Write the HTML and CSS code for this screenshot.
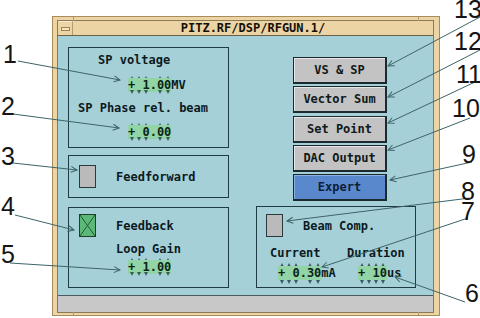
FILE: index.html
```html
<!DOCTYPE html>
<html lang="en">
<head>
  <meta charset="UTF-8">
  <title>PITZ.RF/DSP/RFGUN.1/</title>
  <link rel="stylesheet" href="styles.css">
</head>
<body>
  <div class="page">
    <div class="window">
      <div class="inner">
        <div class="titlebar">
          <div class="menu-btn"><span></span></div>
          <div class="title">PITZ.RF/DSP/RFGUN.1/</div>
        </div>

        <div class="content">
          <div class="left-col">
            <div class="box box-sp">
              <div class="label l-voltage">SP voltage</div>
              <div class="field f-voltage">
                <div class="arrows up"><i></i><i></i><i></i><b></b><i></i><i></i></div>
                <div class="value"><span class="num">+ 1.00</span>MV</div>
                <div class="arrows down"><i></i><i></i><i></i><b></b><i></i><i></i></div>
              </div>
              <div class="label l-phase">SP Phase rel. beam</div>
              <div class="field f-phase">
                <div class="arrows up"><i></i><i></i><i></i><b></b><i></i><i></i></div>
                <div class="value"><span class="num">+ 0.00</span></div>
                <div class="arrows down"><i></i><i></i><i></i><b></b><i></i><i></i></div>
              </div>
            </div>

            <div class="box box-ff">
              <div class="check"></div>
              <div class="label">Feedforward</div>
            </div>

            <div class="box box-fb">
              <div class="check-row">
                <div class="check on"></div>
                <div class="label">Feedback</div>
              </div>
              <div class="label l-gain">Loop Gain</div>
              <div class="field f-gain">
                <div class="arrows up"><i></i><i></i><i></i><b></b><i></i><i></i></div>
                <div class="value"><span class="num">+ 1.00</span></div>
                <div class="arrows down"><i></i><i></i><i></i><b></b><i></i><i></i></div>
              </div>
            </div>
          </div>

          <div class="right-col">
            <div class="buttons">
              <div class="btn">VS &amp; SP</div>
              <div class="btn">Vector Sum</div>
              <div class="btn">Set Point</div>
              <div class="btn">DAC Output</div>
              <div class="btn btn-expert">Expert</div>
            </div>

            <div class="box box-beam">
              <div class="check-row">
                <div class="check"></div>
                <div class="label">Beam Comp.</div>
              </div>
              <div class="beam-cols">
                <div class="col col-current">
                  <div class="label">Current</div>
                  <div class="field f-current">
                    <div class="arrows up"><i></i><i></i><i></i><b></b><i></i><i></i></div>
                    <div class="value"><span class="num">+ 0.30</span>mA</div>
                    <div class="arrows down"><i></i><i></i><i></i><b></b><i></i><i></i></div>
                  </div>
                </div>
                <div class="col col-duration">
                  <div class="label">Duration</div>
                  <div class="field f-duration">
                    <div class="arrows up"><i></i><i></i><i></i><i></i></div>
                    <div class="value"><span class="num">+ 10</span>us</div>
                    <div class="arrows down"><i></i><i></i><i></i><i></i></div>
                  </div>
                </div>
              </div>
            </div>
          </div>
        </div>

        <div class="statusbar"></div>
      </div>
    </div>

    <!-- callout numbers and leader lines -->
    <svg class="notes" width="480" height="318" viewBox="0 0 480 318">
      <defs>
        <marker id="tip" markerWidth="8" markerHeight="8" refX="7" refY="4" orient="auto" markerUnits="userSpaceOnUse">
          <path d="M1,1 L7,4 L1,7" fill="none" stroke="#3d6468" stroke-width="1"/>
        </marker>
      </defs>
      <g class="leaders">
        <line x1="18" y1="61" x2="120" y2="80"/>
        <line x1="13" y1="114" x2="119" y2="128"/>
        <line x1="13" y1="163" x2="77" y2="170"/>
        <line x1="15" y1="215" x2="74" y2="230"/>
        <line x1="10" y1="263" x2="120" y2="270"/>
        <line x1="480" y1="17" x2="388" y2="66"/>
        <line x1="480" y1="50" x2="388" y2="97"/>
        <line x1="475" y1="82" x2="388" y2="123"/>
        <line x1="470" y1="118" x2="388" y2="150"/>
        <line x1="472" y1="162" x2="390" y2="180"/>
        <line x1="470" y1="198" x2="287" y2="221"/>
        <line x1="468" y1="218" x2="322" y2="267"/>
        <line x1="465" y1="302" x2="395" y2="277"/>
      </g>
      <text x="3" y="63">1</text>
      <text x="1" y="115">2</text>
      <text x="1" y="165">3</text>
      <text x="1" y="215">4</text>
      <text x="1" y="263">5</text>
      <text x="454" y="18">13</text>
      <text x="454" y="50">12</text>
      <text x="456" y="83">11</text>
      <text x="452" y="117">10</text>
      <text x="462" y="163">9</text>
      <text x="461" y="200">8</text>
      <text x="461" y="220">7</text>
      <text x="465" y="302">6</text>
    </svg>
  </div>
</body>
</html>
```

FILE: styles.css
```css
body {
  margin: 0;
  background-color: #ffffff;
  font-family: "DejaVu Sans Mono", monospace;
  font-weight: bold;
  font-size: 12px;
  color: #0c1a1e;
}

.page {
  position: relative;
  width: 480px;
  height: 318px;
  box-sizing: border-box;
  padding: 16px 0 0 52px;
  overflow: hidden;
}

/* window frame */
.window {
  position: relative;
  width: 388px;
  height: 300px;
  box-sizing: border-box;
  border: 1px solid #a88c5c;
  background-color: #ecd4a4;
  padding: 4px 6px 3px 5px;
}

.window::before,
.window::after {
  content: "";
  position: absolute;
  left: 20px;
  width: 344px;
  height: 4px;
  border-left: 1px solid #b49a6c;
  border-right: 1px solid #b49a6c;
}

.window::before {
  top: 0;
}

.window::after {
  bottom: 0;
  height: 3px;
}

.inner {
  display: flex;
  flex-direction: column;
  box-shadow: 0 0 0 1px #8c7a56;
}

.titlebar {
  display: flex;
  height: 15px;
  box-sizing: border-box;
  background-color: #ecd4a4;
  border-bottom: 1px solid #6a6046;
}

.menu-btn {
  width: 15px;
  box-sizing: border-box;
  border-right: 1px solid #b49a6c;
  border-top: 1px solid #f8ecd0;
  display: flex;
  align-items: center;
  justify-content: center;
}

.menu-btn span {
  width: 7px;
  height: 2px;
  border: 1px solid #9c8458;
  background-color: #f4e4c0;
}

.title {
  flex: 1;
  text-align: center;
  line-height: 14px;
  color: #141008;
}

.content {
  display: flex;
  height: 259px;
  background-color: #a6d0d8;
}

.statusbar {
  height: 17px;
  box-sizing: border-box;
  background-color: #c8c8c8;
  border-top: 1px solid #4a5a5e;
}

/* group boxes */
.left-col {
  display: flex;
  flex-direction: column;
  width: 161px;
  margin: 11px 0 0 10px;
}

.box {
  border: 1px solid #1f3c44;
  box-sizing: border-box;
}

.box-sp {
  height: 101px;
  padding-top: 5px;
}

.box-ff {
  height: 43px;
  margin-top: 7px;
  display: flex;
  align-items: center;
  gap: 20px;
  padding-left: 10px;
}

.box-fb {
  height: 81px;
  margin-top: 9px;
  padding: 6px 0 0 10px;
}

.label {
  line-height: 14px;
  white-space: pre;
}

.l-voltage {
  margin-left: 29px;
}

.l-phase {
  margin: 7px 0 0 9px;
}

.l-gain {
  margin: 5px 0 0 37px;
}

.check-row {
  display: flex;
  align-items: center;
  gap: 20px;
}

.check {
  width: 17px;
  height: 23px;
  box-sizing: border-box;
  background-color: #bababa;
  border: 1px solid #2c3a3e;
}

.check.on {
  border-color: #1c4028;
  background:
    linear-gradient(to top right, transparent calc(50% - 0.7px), #1c4a2c, transparent calc(50% + 0.7px)),
    linear-gradient(to bottom right, transparent calc(50% - 0.7px), #1c4a2c, transparent calc(50% + 0.7px)),
    #5cb878;
}

/* numeric fields with step arrows */
.field {
  width: max-content;
}

.f-voltage {
  margin: 9px 0 0 59px;
}

.f-phase {
  margin: 8px 0 0 59px;
}

.f-gain {
  margin: 2px 0 0 49px;
}

.arrows {
  display: flex;
  height: 4px;
}

.arrows i,
.arrows b {
  width: 1ch;
  display: flex;
  justify-content: center;
}

.arrows i::before {
  content: "";
  border-left: 2.5px solid transparent;
  border-right: 2.5px solid transparent;
}

.arrows.up i::before {
  border-bottom: 4px solid #3a5a5e;
}

.arrows.down i::before {
  border-top: 4px solid #3a5a5e;
}

.arrows.down {
  margin-top: -1px;
}

.value {
  line-height: 11px;
  height: 11px;
  white-space: pre;
}

.num {
  background-color: #92d4a6;
  color: #0c2418;
}

/* buttons */
.right-col {
  display: flex;
  flex-direction: column;
}

.buttons {
  display: flex;
  flex-direction: column;
  gap: 2.25px;
  width: 94px;
  margin: 21px 0 0 64px;
}

.btn {
  height: 27px;
  box-sizing: border-box;
  background-color: #c3c3c3;
  border: 1px solid #1a2a2e;
  border-right-width: 2px;
  border-bottom-width: 2px;
  box-shadow: inset 1px 1px #e6e6e6;
  text-align: center;
  line-height: 24px;
  color: #101818;
}

.btn-expert {
  background-color: #5a88cc;
  box-shadow: inset 1px 1px #8cb0e4;
  color: #0e1e3a;
}

.box-beam {
  width: 160px;
  height: 82px;
  margin: 5px 0 0 27px;
  padding: 7px 0 0 9px;
}

.beam-cols {
  display: flex;
  margin: 9px 0 0 4px;
}

.col-current {
  width: 77px;
}

.f-current,
.f-duration {
  margin-top: 3px;
}

.f-current {
  margin-left: 8px;
}

.f-duration {
  margin-left: 11px;
}

.beam-cols .value {
  line-height: 12px;
  height: 12px;
}

.beam-cols .arrows.down {
  margin-top: 1px;
}

/* callouts */
.notes {
  position: absolute;
  top: 0;
  left: 0;
  pointer-events: none;
}

.notes line {
  stroke: #3d6468;
  stroke-width: 1;
  marker-end: url(#tip);
}

.notes text {
  font-family: "Liberation Sans", Arial, sans-serif;
  font-weight: normal;
  font-size: 25px;
  fill: #151515;
}
```
